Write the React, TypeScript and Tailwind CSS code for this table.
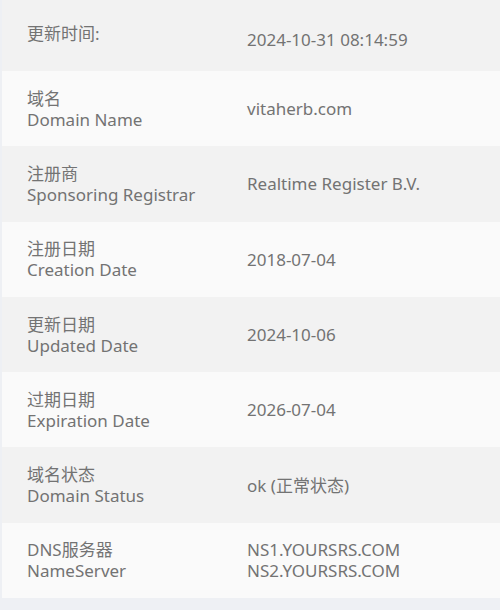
import React from "react";

interface Row {
    cn: string;
    en?: string;
    value: string[];
}

const rows: Row[] = [
    { cn: "域名", en: "Domain Name", value: ["vitaherb.com"] },
    { cn: "注册商", en: "Sponsoring Registrar", value: ["Realtime Register B.V."] },
    { cn: "注册日期", en: "Creation Date", value: ["2018-07-04"] },
    { cn: "更新日期", en: "Updated Date", value: ["2024-10-06"] },
    { cn: "过期日期", en: "Expiration Date", value: ["2026-07-04"] },
    { cn: "域名状态", en: "Domain Status", value: ["ok (正常状态)"] },
    { cn: "DNS服务器", en: "NameServer", value: ["NS1.YOURSRS.COM", "NS2.YOURSRS.COM"] },
];

export default function App() {
    return (
        <div
            className="w-[500px] h-[610px] overflow-hidden bg-[#eef0f4] pl-[2px] text-[17px] leading-[21px] text-[#737373]"
            style={{ fontFamily: '"Noto Sans", "Noto Sans CJK SC", sans-serif' }}
        >
            {/* top row, partly scrolled out */}
            <div className="flex items-center h-[75px] -mt-[4px] bg-[#f2f2f2]">
                <div className="w-[245px] pl-[25px]">更新时间:</div>
                <div className="pt-3">2024-10-31 08:14:59</div>
            </div>

            {rows.map((r, i) => (
                <div
                    key={r.cn}
                    className={`flex items-center h-[75.3px] ${i % 2 === 0 ? "bg-[#fafafa]" : "bg-[#f2f2f2]"}`}
                >
                    <div className="w-[245px] pl-[25px]">
                        <div>{r.cn}</div>
                        <div>{r.en}</div>
                    </div>
                    <div>
                        {r.value.map((v) => (
                            <div key={v}>{v}</div>
                        ))}
                    </div>
                </div>
            ))}
        </div>
    );
}
